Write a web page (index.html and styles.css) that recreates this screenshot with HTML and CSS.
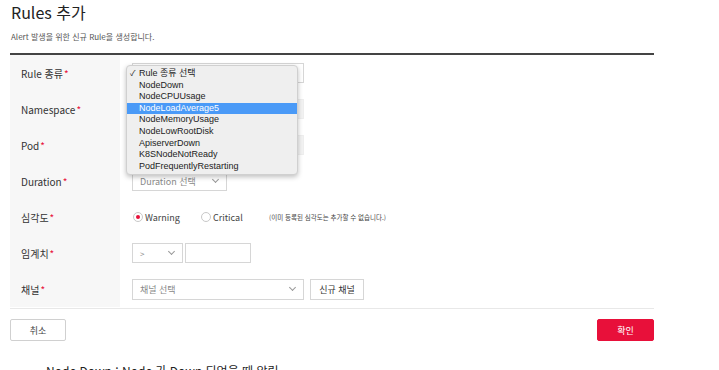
FILE: index.html
```html
<!DOCTYPE html>
<html lang="ko">
<head>
<meta charset="utf-8">
<link rel="stylesheet" href="styles.css">
</head>
<body>
<div class="page">
  <h1 class="title">Rules 추가</h1>
  <p class="subtitle">Alert 발생을 위한 신규 Rule을 생성합니다.</p>
  <div class="form">
    <div class="label">Rule 종류<span class="req">*</span></div>
    <div class="field">
      <div class="select w172"><span class="ph">Rule 종류 선택</span><span class="chev"></span></div>
      <div class="popup">
        <div class="opt"><span class="check">✓</span>Rule 종류 선택</div>
        <div class="opt">NodeDown</div>
        <div class="opt">NodeCPUUsage</div>
        <div class="opt sel">NodeLoadAverage5</div>
        <div class="opt">NodeMemoryUsage</div>
        <div class="opt">NodeLowRootDisk</div>
        <div class="opt">ApiserverDown</div>
        <div class="opt">K8SNodeNotReady</div>
        <div class="opt">PodFrequentlyRestarting</div>
      </div>
    </div>
    <div class="label">Namespace<span class="req">*</span></div>
    <div class="field"><div class="select w172 disabled"><span class="chev"></span></div></div>
    <div class="label">Pod<span class="req">*</span></div>
    <div class="field"><div class="select w172 disabled"><span class="chev"></span></div></div>
    <div class="label">Duration<span class="req">*</span></div>
    <div class="field"><div class="select w95"><span class="ph">Duration 선택</span><span class="chev"></span></div></div>
    <div class="label">심각도<span class="req">*</span></div>
    <div class="field radios">
      <label class="radio"><span class="dot on"></span>Warning</label>
      <label class="radio crit"><span class="dot"></span>Critical</label>
      <span class="note">(이미 등록된 심각도는 추가할 수 없습니다.)</span>
    </div>
    <div class="label">임계치<span class="req">*</span></div>
    <div class="field">
      <div class="select w51"><span class="ph small">&gt;</span><span class="chev"></span></div>
      <div class="input w66"></div>
    </div>
    <div class="label">채널<span class="req">*</span></div>
    <div class="field">
      <div class="select w172 h21"><span class="ph">채널 선택</span><span class="chev"></span></div>
      <button class="btn-sm">신규 채널</button>
    </div>
  </div>
  <div class="actions">
    <button class="btn cancel">취소</button>
    <button class="btn ok">확인</button>
  </div>
  <p class="desc">— Node Down : Node 가 Down 되었을 때 알림</p>
</div>
</body>
</html>
```

FILE: styles.css
```css
* { box-sizing: border-box; }
body {
  margin: 0;
  background: #fff;
  font-family: "Noto Sans CJK KR", "Noto Sans", sans-serif;
  color: #333;
  overflow: hidden;
}
.page {
  width: 644px;
  margin-left: 10px;
  position: relative;
}
.title {
  margin: 0;
  padding: 2px 0 0 1px;
  font-size: 16px;
  font-weight: 400;
  line-height: 20px;
  color: #222;
}
.subtitle {
  margin: 9px 0 0 1px;
  font-size: 8px;
  line-height: 12px;
  color: #555;
}
.form {
  margin-top: 10px;
  border-top: 2px solid #444;
  border-bottom: 1px solid #e8e8e8;
  display: grid;
  grid-template-columns: 110px 1fr;
  grid-auto-rows: 36px;
  padding-bottom: 1px;
}
.label {
  background: #f7f7f7;
  display: flex;
  align-items: center;
  padding-left: 11px;
  font-size: 10px;
  color: #333;
}
.req {
  color: #e8103a;
  margin-left: 1px;
}
.field {
  display: flex;
  align-items: center;
  padding-left: 12px;
  gap: 2px;
  position: relative;
}
.select {
  height: 20px;
  border: 1px solid #d6d6d6;
  background: #fff;
  display: flex;
  align-items: center;
  justify-content: space-between;
  padding: 0 8px 0 7px;
}
.select.disabled {
  background: #f3f3f3;
  border-color: #eeeeee;
}
.w172 { width: 172px; }
.w95 { width: 95px; }
.w51 { width: 51px; }
.w66 { width: 66px; }
.h21 { height: 21px; }
.ph {
  font-size: 9px;
  color: #888;
}
.ph.small { font-size: 8px; }
.chev {
  width: 5px;
  height: 5px;
  border-right: 1px solid #999;
  border-bottom: 1px solid #999;
  transform: rotate(45deg);
  margin-top: -3px;
}
.input {
  height: 20px;
  border: 1px solid #d6d6d6;
  background: #fff;
}
.btn-sm {
  margin-left: 4px;
  height: 21px;
  width: 54px;
  border: 1px solid #d6d6d6;
  background: #fff;
  font-family: inherit;
  font-size: 9px;
  color: #333;
  padding: 0;
}
.radios { gap: 0; }
.radio {
  display: flex;
  align-items: center;
  font-size: 9px;
  color: #444;
  width: 68px;
  padding-left: 1px;
}
.radio.crit { width: 69px; }
.dot {
  width: 10px;
  height: 10px;
  border-radius: 50%;
  border: 1px solid #c8c8c8;
  background: #fff;
  margin-right: 2px;
  position: relative;
}
.dot.on::after {
  content: "";
  position: absolute;
  left: 2px;
  top: 2px;
  width: 4px;
  height: 4px;
  border-radius: 50%;
  background: #e8103a;
}
.note {
  font-size: 6.5px;
  color: #444;
}
.popup {
  position: absolute;
  left: 6px;
  top: 10px;
  width: 172px;
  height: 110px;
  background: #efefef;
  border: 1px solid #d0d0d0;
  border-radius: 4px;
  box-shadow: 0 2px 5px rgba(0,0,0,0.25);
  padding-top: 2px;
  font-family: "Liberation Sans", Arial, sans-serif;
  font-size: 9px;
  color: #222;
  z-index: 5;
}
.opt {
  height: 11.6px;
  line-height: 11.6px;
  padding-left: 12px;
  position: relative;
  white-space: nowrap;
}
.opt.sel {
  background: #4a9af7;
  color: #fff;
}
.check {
  position: absolute;
  left: 3px;
  font-size: 8px;
}
.opt:first-child {
  font-family: "Liberation Sans", "Noto Sans CJK KR", sans-serif;
}
.actions {
  display: flex;
  justify-content: space-between;
  margin-top: 10px;
}
.btn {
  height: 22px;
  width: 56px;
  border-radius: 2px;
  font-family: inherit;
  font-size: 9px;
  padding: 0;
}
.cancel {
  background: #fff;
  border: 1px solid #d0d0d0;
  color: #444;
}
.ok {
  width: 57px;
  background: #e8103a;
  border: 1px solid #e8103a;
  color: #fff;
}
.desc {
  margin: 22px 0 0 22px;
  font-size: 12px;
  line-height: 16px;
  color: #222;
  white-space: nowrap;
}
```
